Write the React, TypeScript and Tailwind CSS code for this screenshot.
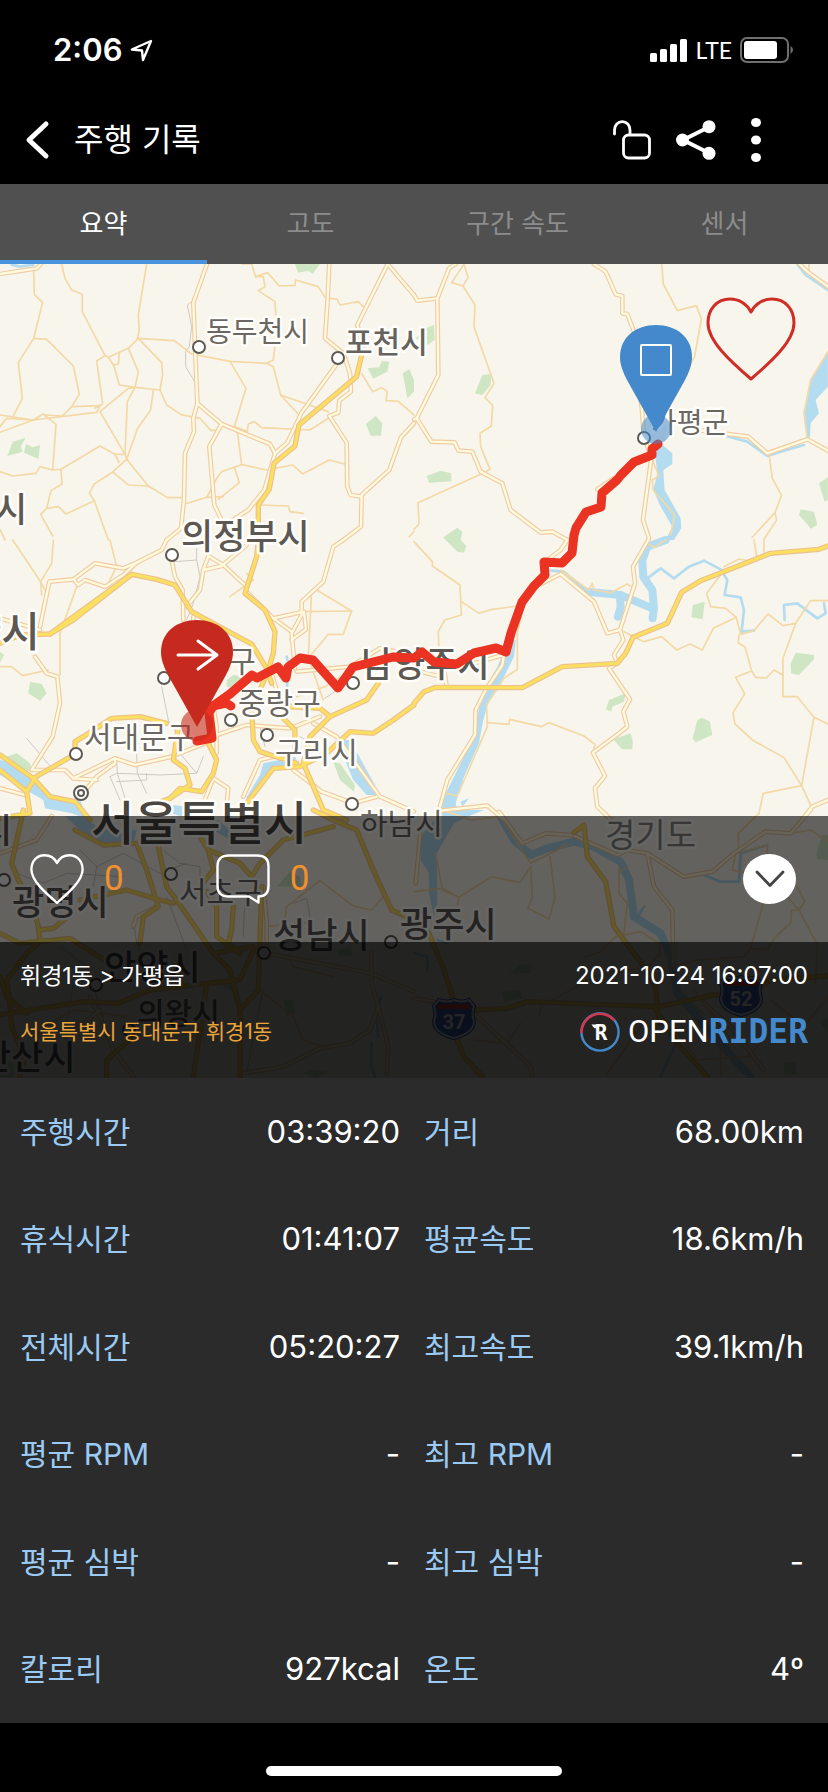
import React from 'react';

type Tile = {
  x: number;
  y: number;
  green?: string[];
  water?: string[];
  river?: string[];
  stream?: string[];
  rail?: string[];
  minor?: string[];
  major?: string[];
  highway?: string[];
};

// Vector tiles, drawn at three units per pixel
const tiles: Tile[] = [
  {
    x: 0,
    y: 260,
    green: ["22,588 38,545 77,533 62,560 68,575", "78,552 98,562 120,555 115,597 72,578", "885,12 960,12 938,42 925,32 895,38", "1103,325 1138,322 1145,303 1168,305 1162,335 1120,356", "1208,340 1228,328 1242,360 1242,395 1222,415 1215,375", "1098,492 1127,467 1147,490 1143,527 1112,527"],
    stream: ["35,14 60,20 100,14"],
    rail: ["575,125 562,135 575,200 568,260 557,275 557,320 587,370"],
    minor: [
      "185,12 195,55 215,90 247,103 247,155 315,287 325,292",
      "440,12 415,165 418,210 412,235",
      "101,35 103,103 128,128 101,235 55,308 67,415 40,468",
      "101,235 140,238 220,318 238,403 215,440 187,468 135,465",
      "0,465 100,480 290,457 300,437 215,440",
      "0,517 100,480 130,462 168,493 158,630 120,620 108,640 38,648 0,635",
      "0,500 20,475 100,480",
      "325,292 385,265 415,235 523,242 575,282 690,304 800,310 820,300 830,215 825,125 775,92 795,80 790,50 767,50 755,12 725,12",
      "767,50 803,38 838,78 885,76 887,60 955,80 975,112 1012,118 1020,135 1075,125 1092,142",
      "415,235 485,308 488,345 480,390 405,382 358,375 342,318 325,292",
      "385,265 415,335 405,382 382,425 375,583",
      "342,315 355,312 358,280",
      "315,287 290,303 308,432 285,445",
      "405,382 385,385 300,455 375,583 380,598 445,678 503,713 545,713",
      "460,390 452,450 413,505 380,598",
      "480,390 500,435 543,464 600,475 633,512 663,508",
      "375,583 345,583 300,558 183,628 158,630",
      "345,583 357,608",
      "183,628 186,672 153,692 140,745 175,740 198,762 283,722 268,700 283,672 338,636 380,598",
      "338,636 385,675 445,678",
      "283,722 325,840",
      "140,745 122,763 158,828",
      "0,808 15,840",
      "690,304 738,385 703,500 742,515 745,492 763,485 785,503 930,510 985,475",
      "800,310 820,320 842,405 900,468",
      "842,405 985,455",
      "712,515 725,614 800,630 878,615 908,642 988,600 1035,612",
      "725,614 703,622 665,635 650,655 620,712",
      "703,622 718,668 655,718",
      "545,735 620,712 670,710",
      "780,735 865,738 870,755 910,760",
      "1085,340 1118,395 1145,383 1162,395 1158,422 1195,424 1242,465",
      "1242,815 1228,830",
    ],
    major: [
      "0,42 110,25 125,10",
      "622,10 580,128 592,430 580,475 582,515 555,580 552,720 543,805 500,840",
      "592,430 665,492 810,552 825,580",
      "665,492 628,560 643,735 665,780",
      "988,10 983,120 975,235 1030,280 1050,340 1053,395 1018,422 1015,458 988,468 1040,548 1042,680 1052,705 1085,710 1083,800 1030,840",
      "1163,12 1072,195 1088,250 1085,290",
      "1163,12 1242,105",
      "1030,285 905,458 862,548 825,580 793,690 745,750 690,785",
      "1242,490 1203,532 1168,630 1085,705",
    ],
    highway: ["1085,285 1070,350 897,495 885,558 822,610 808,688 775,735 775,840"],
  },
  {
    x: 414,
    y: 260,
    green: ["183,400 205,345 232,342 230,375 205,405", "38,648 80,632 112,640 112,664 45,668", "88,832 130,803 145,815 140,840 95,840", "35,205 60,195 62,240 40,255 5,235", "1215,670 1242,652 1242,720 1232,725", "1155,765 1160,748 1200,755 1210,795 1190,806 1180,793"],
    water: ["720,555 740,550 775,580 775,612 748,630 752,690 800,775 802,805 780,840 755,840 775,800 740,740 718,690 730,640", "1242,275 1190,360 1172,460 1180,535 1188,530 1190,490 1215,460 1205,420 1242,380"],
    stream: ["870,510 950,532 1000,545 1060,588 1100,575 1170,555", "1150,12 1175,45 1242,90"],
    minor: [
      "150,12 113,68 147,78 162,52 150,12",
      "147,78 183,135 180,200 240,370 213,413 236,436 232,498 198,520 200,560 228,628 200,643 12,728 15,792 0,808",
      "743,12 748,72 790,152 847,137 862,177 842,290 830,310",
      "1242,275 1190,360 1170,460 1180,538",
      "1065,580 1075,655 1103,706 1083,758 1015,832",
      "1083,758 1088,780 1050,838",
      "715,600 735,648 715,660 718,690 782,765 770,825",
      "1185,12 1185,35",
    ],
    major: [
      "125,12 105,25 70,115 10,122 0,105",
      "70,115 73,345 8,475 52,545 122,547 133,572 175,575 200,635 265,670 290,750 380,818 415,815 460,840",
      "0,478 8,475",
      "540,12 575,35 605,103 625,108 625,160 640,162 660,215 683,440 690,530 712,595 687,780 705,835",
      "850,510 1003,530 1060,580 1180,538 1242,572",
      "550,688 600,655",
      "1155,10 1180,35 1242,80",
    ],
  },
  {
    x: 0,
    y: 540,
    green: ["85,460 90,425 125,432 140,460 120,482", "680,440 680,420 700,405 730,408 745,430 725,450", "20,650 50,640 90,670 95,695 70,690", "0,335 12,345 0,368", "1000,665 1020,670 1065,735 1062,755 1020,720"],
    water: ["0,660 0,705 130,780 135,805 215,820 265,840 240,780 150,770 95,715 30,668", "1010,600 1050,600 1125,735 1130,765 1100,765 1060,720", "790,670 885,650 895,672 820,690 760,775 738,775 780,705", "480,790 560,800 620,840 580,840 500,815"],
    stream: ["860,350 865,370 860,460"],
    rail: [
      "525,65 590,60 590,25",
      "590,60 600,110 580,190 560,240",
      "485,440 505,540",
      "330,710 350,700 480,705 590,700 610,650",
      "350,660 352,700 380,790",
      "410,640 412,700 440,760",
      "330,710 360,780",
      "440,700 440,720 350,725",
      "780,560 795,620",
      "1040,430 975,475",
      "505,540 535,590",
      "590,700 540,640",
      "80,595 160,690",
      "900,590 950,620",
    ],
    minor: [
      "950,150 1055,213 1030,283 985,283 925,355",
      "905,215 1055,213",
      "160,0 155,70 122,125 125,165",
      "38,0 122,125 140,160",
      "330,0 350,80 320,140",
      "0,380 35,380 68,407 145,390",
      "230,140 180,280 180,405",
      "935,150 925,355",
      "925,355 970,480",
      "690,170 760,120 740,100",
      "890,470 975,440 1040,400",
    ],
    major: [
      "500,0 485,30 410,68 370,85 285,70 220,118 148,125 120,260",
      "220,118 235,135 255,120 315,140 370,105 410,68",
      "0,235 120,270",
      "515,60 525,110 548,150 550,240",
      "580,230 580,255",
      "625,48 610,90 600,150 560,200",
      "625,48 670,75 740,140",
      "610,90 665,78 740,15",
      "1030,0 1000,20 970,125 905,185 905,225 875,280 885,385",
      "740,155 820,235 912,215 918,268 875,300",
      "820,235 875,275",
      "105,350 140,400 172,410 180,490 158,590 95,690",
      "815,400 830,450 880,490",
      "890,395 1050,380 1140,325 1242,345",
      "100,690 195,690 220,715 345,655 405,675 515,650",
      "345,655 345,670 290,710 240,770",
      "220,715 290,720",
      "650,585 740,555 870,565 960,530",
      "640,500 650,560 650,640",
      "640,715 685,745 680,790",
      "640,715 610,790",
      "940,550 1010,590 1140,770 1242,815",
      "1130,770 1060,790 965,755 880,690",
      "730,770 780,660 820,650",
      "0,745 75,765",
      "515,650 640,600 650,585",
    ],
    highway: [
      "0,310 60,285 150,282 220,240 395,103 470,118 525,135 575,215 755,312 800,385 815,430",
      "150,282 200,245 395,103",
      "775,0 770,50 735,160 795,210 825,275 820,340 805,390 780,450 755,500 760,600 780,635 890,670",
      "1242,495 1180,540 1120,580 1050,575 980,640 900,680 820,685 740,790",
      "1135,430 1100,480 990,530 930,590 910,670 940,740 970,810 1040,840",
      "990,530 960,505 860,500",
      "850,535 885,570 885,640",
      "500,550 420,530 335,535 250,590 225,605 225,630",
      "0,645 100,715 150,770 225,785 270,840",
      "100,715 230,640",
      "0,690 80,755 105,715",
      "80,755 90,820 0,835",
      "535,560 520,660 555,685 570,735 510,775",
      "620,600 650,660 640,700 605,755 540,745 510,775 470,790",
    ],
  },
  {
    x: 414,
    y: 540,
    green: ["837,195 872,185 866,238 832,232", "1130,372 1145,338 1200,345 1200,358 1155,405 1132,400", "850,540 865,533 888,545 895,585 845,607 836,595", "597,598 650,580 657,605 655,628 625,628", "585,480 635,460 630,485 595,500 592,515 576,508", "95,0 140,0 157,18 150,38 130,35"],
    water: ["285,300 305,300 300,350 270,410 225,480 208,540 195,610 150,710 125,790 130,815 80,810 90,770 175,600 205,460 250,380", "140,785 165,775 145,800"],
    river: ["755,0 700,20 685,60 688,110 715,150 720,205 716,235", "520,155 620,165 715,205", "618,165 620,200 612,230"],
    stream: ["700,115 740,85 780,115 825,80 870,62 920,88 940,120 932,165 980,172 990,210 983,275 1020,272", "1112,240 1110,195 1150,190 1210,235 1235,220 1230,190", "410,92 450,95 520,155"],
    minor: [
      "0,5 55,65 55,78 138,135 142,225 92,240 73,275 75,340",
      "142,185 195,220 235,208 310,198 390,100",
      "325,210 310,280 310,388 270,415 218,495 220,560 130,768 95,760",
      "220,548 285,553 287,538 382,560 405,548 510,588 543,613 537,638",
      "630,275 690,305 743,290 788,330 828,312 865,330 898,265 967,232 935,205 890,200 878,160 920,105",
      "967,232 980,283 1020,272 1062,222 1107,257 1145,250 1190,182 1242,182",
      "975,285 973,310 993,320 1013,393 1025,412 1057,414 1080,390 1107,405 1107,470 1150,470 1200,532 1242,552",
      "1013,393 965,412 992,462 957,518 963,552 1015,600 1110,653 1163,737",
      "1145,250 1107,355 1107,405",
      "1200,532 1163,737 1048,760 1035,820",
      "1163,737 1192,800",
      "1020,0 1030,60",
      "1050,0 1050,40",
      "930,80 975,57 1000,62",
      "440,90 525,150 535,130 540,150 590,158 640,132 660,145",
      "700,10 720,22 755,0",
    ],
    major: [
      "460,0 440,30 400,60",
      "385,130 440,102 540,185 580,280 618,270 663,130 657,80 703,0",
      "618,270 628,300 600,345 610,370 585,385 648,478 628,515 640,560 615,580 537,638 573,708 543,745 550,800 590,838",
      "270,345 265,375 215,450 185,510 183,585 100,720 78,800",
      "1242,780 1195,800 1165,838",
      "80,812 220,797 270,840",
      "0,390 70,408 90,390 180,370 250,350 270,345",
      "92,400 98,440",
    ],
    highway: ["0,490 30,455 65,442 325,443 445,380 610,370 635,340 657,292 760,250 803,157 860,122 1070,40 1215,28 1242,18"],
  },
  {
    x: 0,
    y: 810,
    green: ["830,230 870,185 900,200 905,230", "650,520 700,500 700,545", "850,570 880,570 885,610 860,620", "1010,420 1050,410 1060,435 1020,440", "0,745 40,760 45,800 0,803", "905,790 940,780 980,785 950,803"],
    water: ["195,18 240,60 290,100 400,100 410,60 300,55 240,18", "640,18 700,70 690,90 640,60"],
    stream: ["1145,560 1128,600 1135,680", "1115,700 1112,760 1125,800"],
    rail: [
      "240,120 290,170 280,230",
      "290,170 370,130 480,190 560,160",
      "50,190 130,220 200,190 370,200",
      "490,120 540,160 600,170 600,210",
      "735,260 730,380",
      "400,330 410,400 430,440",
      "220,520 200,640 260,700",
      "790,540 760,680 740,790",
      "880,280 920,265 935,350 900,330",
      "500,260 560,420",
      "180,410 260,470 310,620",
    ],
    minor: [
      "850,360 860,290 960,212 1060,288 1115,300 1150,260",
      "780,540 880,620 910,690 970,710",
      "100,690 150,640 220,600 380,620",
      "860,420 880,470 1000,500",
      "800,350 850,345",
    ],
    major: [
      "155,18 110,90 0,130",
      "320,18 310,60",
      "790,230 800,330 800,430 1115,490 1242,545",
      "730,790 850,770 960,715 1050,700 1110,660 1135,590 1115,520 1115,430",
      "1135,590 1165,710 1160,790",
      "400,350 410,320 470,290",
      "270,560 300,620 340,720 400,800",
      "200,680 300,600",
    ],
    highway: [
      "70,0 35,160 55,210 100,290 115,350 120,395 80,430 20,510 30,590 35,650 75,740 60,800",
      "225,60 310,105 400,100",
      "410,100 440,180 475,290 430,320 420,400",
      "475,110 500,230 540,285 640,430 690,480",
      "600,80 625,120 720,160 755,200 780,160 850,90 1000,50",
      "940,0 1000,30 1070,60 1120,180 1175,300 1242,330",
      "625,120 640,180 600,230",
      "620,245 650,290 650,380 720,430",
      "700,290 695,360 680,420",
      "785,230 775,540 720,600 720,800",
      "620,520 610,600 580,800",
      "0,370 60,400 210,385 330,460",
      "0,615 250,575 355,580 450,540 620,520 720,510 760,420",
      "115,360 160,355 215,310",
      "240,270 380,240 480,270 520,280",
      "320,800 320,750 400,680",
      "690,480 720,600",
      "640,430 760,410",
      "0,500 20,560 80,610",
    ],
  },
  {
    x: 414,
    y: 810,
    green: ["1208,130 1225,75 1242,75 1242,150 1208,148", "285,490 320,465 355,462 350,490", "262,545 320,540 325,565 270,575", "800,540 850,590 880,620 840,600", "1110,760 1145,755 1145,795 1110,790", "1220,640 1242,620 1242,670"],
    water: ["20,80 85,0 210,0 160,20 120,40 68,130 70,280 60,320 45,250 45,190 20,150"],
    river: ["260,20 300,90 350,135 400,115 480,95 540,110 620,155 645,210 660,320 740,370 770,440 790,550 900,680 1010,800"],
    stream: ["870,195 920,215 975,215 980,130 1060,105", "0,430 40,440 40,480", "790,690 740,800", "70,390 100,400", "670,320 690,290"],
    minor: [
      "65,130 85,240 135,262 130,285",
      "0,245 85,235 135,262 233,200 318,218 350,170",
      "350,170 355,260 342,295 405,327 423,265 408,140",
      "615,170 615,250 640,280 630,370 600,385",
      "640,170 615,190",
      "515,440 560,425 605,380 680,365 735,400 740,430 700,470 540,500 380,590 375,620",
      "1060,130 1060,105 965,130 955,180 1000,190",
      "975,130 973,70 1035,10",
      "1120,260 1155,300 1133,300 1130,340 1085,380 1060,420 1010,415 1048,280",
      "1155,300 1172,275 1150,230",
      "1155,300 1210,405 1205,520",
      "1130,70 1190,60 1242,95",
      "735,480 850,450 990,440 1010,415",
      "840,540 920,650 920,790",
      "780,650 850,750 1000,740 1050,690",
      "180,690 280,700 320,640",
      "580,790 680,650",
      "1070,570 1170,650 1242,560",
      "100,5 170,30 260,20 350,160 460,105",
    ],
    major: [
      "255,5 325,100 395,70 475,75 610,135 640,120 700,130 810,200 895,185 960,130 1055,65 1130,70 1190,0",
      "700,130 720,230 775,300 778,460",
      "20,60 5,220",
      "180,610 350,770 355,800",
      "0,565 60,575",
      "870,580 950,650 1050,780",
    ],
    highway: [
      "480,68 510,45 520,140 575,215 600,350 690,470 725,530 735,640",
      "0,340 45,370 90,480 115,560 125,680 150,740 205,800",
      "180,600 280,595 340,575 735,590 900,555 1000,560 1070,510 1242,498",
      "720,590 790,700 880,800",
    ],
  },
];

// One entry for each stroke laid on the map, bottom first
const strokes: { layer: 'river' | 'stream' | 'rail' | 'minor' | 'major' | 'highway'; color: string; width: number }[] = [
  { layer: 'river', color: '#b4dcf0', width: 24 },
  { layer: 'stream', color: '#b4dcf0', width: 8 },
  { layer: 'rail', color: '#cbcac4', width: 3 },
  { layer: 'minor', color: '#f3d9a5', width: 5 },
  { layer: 'major', color: '#f0cba6', width: 14 },
  { layer: 'major', color: '#fffbdc', width: 7 },
  { layer: 'highway', color: '#eec08e', width: 16 },
  { layer: 'highway', color: '#fbe05f', width: 9 },
];

const places = [
  { name: '동두천시', x: 206, y: 342, size: 28, tone: '#6b6863', weight: 400 },
  { name: '포천시', x: 345, y: 353, size: 30, tone: '#66635e', weight: 500 },
  { name: '가평군', x: 651, y: 433, size: 28, tone: '#6b6863', weight: 400 },
  { name: '시', x: -5, y: 522, size: 35, tone: '#5c5954', weight: 500 },
  { name: '의정부시', x: 181, y: 549, size: 35, tone: '#5c5954', weight: 500 },
  { name: '고양시', x: -76, y: 647, size: 42, tone: '#5c5954', weight: 500 },
  { name: '남양주시', x: 361, y: 677, size: 35, tone: '#5c5954', weight: 500 },
  { name: '노원구', x: 173, y: 672, size: 30, tone: '#6b6863', weight: 400 },
  { name: '중랑구', x: 238, y: 714, size: 30, tone: '#6b6863', weight: 400 },
  { name: '서대문구', x: 84, y: 748, size: 30, tone: '#6b6863', weight: 400 },
  { name: '구리시', x: 275, y: 763, size: 30, tone: '#6b6863', weight: 400 },
  { name: '서울특별시', x: 91, y: 840, size: 47, tone: '#4a4742', weight: 500 },
  { name: '시', x: -20, y: 843, size: 35, tone: '#5c5954', weight: 500 },
  { name: '하남시', x: 360, y: 834, size: 30, tone: '#6b6863', weight: 400 },
  { name: '경기도', x: 605, y: 847, size: 33, tone: '#8b8882', weight: 400 },
  { name: '광명시', x: 12, y: 915, size: 35, tone: '#5c5954', weight: 500 },
  { name: '서초구', x: 179, y: 903, size: 30, tone: '#6b6863', weight: 400 },
  { name: '성남시', x: 273, y: 948, size: 35, tone: '#5c5954', weight: 500 },
  { name: '광주시', x: 400, y: 937, size: 35, tone: '#5c5954', weight: 500 },
  { name: '안양시', x: 104, y: 980, size: 35, tone: '#5c5954', weight: 500 },
  { name: '의왕시', x: 137, y: 1024, size: 30, tone: '#66635e', weight: 500 },
  { name: '안산시', x: -21, y: 1070, size: 35, tone: '#5c5954', weight: 500 },
];

const towns = [
  [199, 347], [338, 358], [644, 438], [172, 555], [164, 678], [231, 720], [267, 735], [353, 683],
  [76, 754], [352, 804], [171, 874], [4, 880], [264, 953], [391, 942], [96, 985], [129, 1030],
];

const route =
  '197,741 212,738 209,713 213,706 230,694 252,675 257,678 278,667 286,678 288,667 300,658 313,660 338,688 353,667 393,657 414,658 422,652 434,662 457,664 474,653 496,648 506,652 511,633 522,602 534,586 545,575 544,562 562,563 572,553 574,535 576,528 586,512 601,507 602,493 617,480 621,475 634,462 652,455 652,449 658,444';

const stats = [
  { label: '주행시간', value: '03:39:20' },
  { label: '거리', value: '68.00km' },
  { label: '휴식시간', value: '01:41:07' },
  { label: '평균속도', value: '18.6km/h' },
  { label: '전체시간', value: '05:20:27' },
  { label: '최고속도', value: '39.1km/h' },
  { label: '평균 RPM', value: '-' },
  { label: '최고 RPM', value: '-' },
  { label: '평균 심박', value: '-' },
  { label: '최고 심박', value: '-' },
  { label: '칼로리', value: '927kcal' },
  { label: '온도', value: '4º' },
];

const tabs = ['요약', '고도', '구간 속도', '센서'];

const PIN = 'M0 0 L-29 -52 C-33 -60 -36 -67 -36 -75 C-36 -95 -20 -107 0 -107 C20 -107 36 -95 36 -75 C36 -67 33 -60 29 -52 Z';

const Shield: React.FC<{ x: number; y: number; num: string }> = ({ x, y, num }) => (
  <g transform={`translate(${x} ${y})`}>
    <path d="M-15 -19 Q-7 -16 0 -19 Q7 -16 15 -19 L20 -13 Q17 -6 20 2 Q20 14 0 19 Q-20 14 -20 2 Q-17 -6 -20 -13 Z" fill="#3f68c9" stroke="#2c55bb" strokeWidth="4" />
    <path d="M-15 -19 Q-7 -16 0 -19 Q7 -16 15 -19 L20 -13 Q17 -6 20 2 Q20 14 0 19 Q-20 14 -20 2 Q-17 -6 -20 -13 Z" fill="#3f68c9" stroke="#e9eefb" strokeWidth="2" />
    <path d="M-15 -16 Q-7 -13 0 -16 Q7 -13 15 -16 L17 -10 H-17 Z" fill="#dd4a3f" />
    <text y="10" textAnchor="middle" className="font-['Roboto',sans-serif]" fontSize="20" fontWeight="700" fill="#fff">{num}</text>
  </g>
);

const RouteMap: React.FC = () => (
  <svg
    viewBox="0 264 828 814"
    preserveAspectRatio="xMidYMid slice"
    className="absolute inset-0 w-full h-full bg-[#f8f5ec]"
    role="img"
    aria-label="주행 경로"
  >
    {tiles.map((tile) => (
      <g key={`area-${tile.x}-${tile.y}`} transform={`translate(${tile.x} ${tile.y}) scale(0.3333)`}>
        {tile.green?.map((points) => <polygon key={points} points={points} fill="#cfe6c4" />)}
        {tile.water?.map((points) => <polygon key={points} points={points} fill="#b4dcf0" />)}
      </g>
    ))}
    {strokes.map((stroke, idx) =>
      tiles.map((tile) => (
        <g
          key={`${idx}-${tile.x}-${tile.y}`}
          transform={`translate(${tile.x} ${tile.y}) scale(0.3333)`}
          fill="none"
          stroke={stroke.color}
          strokeWidth={stroke.width}
          strokeLinejoin="round"
          strokeLinecap="round"
        >
          {tile[stroke.layer]?.map((points) => <polyline key={points} points={points} />)}
        </g>
      ))
    )}

    <Shield x={454} y={1019} num="37" />
    <Shield x={741} y={996} num="52" />

    {places.map((place) => (
      <text
        key={`${place.name}-${place.y}`}
        x={place.x}
        y={place.y}
        fontSize={place.size}
        fontWeight={place.weight}
        fill={place.tone}
        stroke="#fffefa"
        strokeWidth="5"
        strokeLinejoin="round"
        paintOrder="stroke"
      >
        {place.name}
      </text>
    ))}
    {towns.map(([x, y]) => (
      <circle key={`${x}-${y}`} cx={x} cy={y} r="6" fill="#fff" stroke="#5c5954" strokeWidth="2" />
    ))}
    <g fill="#fff" stroke="#5c5954" strokeWidth="2">
      <circle cx="81" cy="793" r="7" />
      <circle cx="81" cy="793" r="3" />
    </g>

    <g fill="none" stroke="#ea3323" strokeWidth="9" strokeLinejoin="round" strokeLinecap="round">
      <polyline points={route} />
      <polyline points="213,706 226,703 231,706" />
    </g>

    <g transform="translate(197 727)">
      <circle cy="-2" r="16" fill="#c62a1e" fillOpacity="0.6" />
      <path d={PIN} fill="#c62a1e" />
      <path d="M-19 -72 H19 M1 -86 L20 -72 L1 -58" fill="none" stroke="#fff" strokeWidth="3" strokeLinecap="round" strokeLinejoin="round" />
    </g>
    <g transform="translate(656 432)">
      <circle cy="-3" r="15" fill="#4389cb" fillOpacity="0.55" />
      <path d={PIN} fill="#4389cb" />
      <rect x="-15" y="-87" width="30" height="30" rx="1" fill="none" stroke="#fff" strokeWidth="2" />
    </g>
  </svg>
);

const HeartIcon: React.FC<{ className: string; strokeWidth: number }> = ({ className, strokeWidth }) => (
  <svg viewBox="0 0 90 84" fill="none" stroke="currentColor" strokeWidth={strokeWidth} strokeLinejoin="round" className={className} aria-hidden="true">
    <path d="M45 15 C41 7 33 2 24 2 C11 2 2 12 2 26 C2 44 24 64 45 82 C66 64 88 44 88 26 C88 12 79 2 66 2 C57 2 49 7 45 15 Z" />
  </svg>
);

const StatusBar: React.FC = () => (
  <div className="flex h-24 items-center justify-between pt-1 pl-[53px] pr-[34px]">
    <div className="flex items-center gap-2">
      <span className="text-[31px] leading-10 font-semibold">2:06</span>
      <svg viewBox="0 0 23 23" className="h-[23px] w-[23px]" fill="none" stroke="currentColor" strokeWidth="2.4" strokeLinejoin="round" aria-hidden="true">
        <path d="M21 2 L1.800 10.500 L12 11.500 L13 21 Z" />
      </svg>
    </div>
    <div className="flex items-center gap-2">
      <svg viewBox="0 0 38 24" className="h-6 w-[38px]" fill="currentColor" aria-hidden="true">
        <rect x="1" y="15" width="7" height="9" rx="1.500" />
        <rect x="11" y="11" width="7" height="13" rx="1.500" />
        <rect x="21" y="6" width="7" height="18" rx="1.500" />
        <rect x="31" y="1" width="7" height="23" rx="1.500" />
      </svg>
      <span className="font-['Lato',sans-serif] text-[23px] leading-8">LTE</span>
      <svg viewBox="0 0 54 26" className="h-[26px] w-[54px]" aria-hidden="true">
        <rect x="1" y="1" width="47" height="24" rx="6" fill="none" stroke="#6f6f6f" strokeWidth="2" />
        <rect x="4" y="4" width="33" height="18" rx="3" fill="#fff" />
        <path d="M50.500 9 Q53 10.500 53 13 Q53 15.500 50.500 17 Z" fill="#6f6f6f" />
      </svg>
    </div>
  </div>
);

const TitleBar: React.FC = () => (
  <header className="flex h-[88px] items-center pr-11 pl-4">
    <button type="button" aria-label="뒤로" className="flex h-16 w-[58px] items-center pl-2">
      <svg viewBox="0 0 28 40" className="h-10 w-7" fill="none" stroke="currentColor" strokeWidth="5" strokeLinecap="round" strokeLinejoin="round">
        <path d="M22 4 L5 20 L22 36" />
      </svg>
    </button>
    <h1 className="flex-1 text-[32px] leading-10 font-normal">주행 기록</h1>
    <button type="button" aria-label="잠금 해제" className="flex h-16 w-16 items-center justify-center">
      <svg viewBox="0 0 38 40" className="h-10 w-[38px]" fill="none" stroke="currentColor" strokeWidth="2.800" strokeLinecap="round">
        <path d="M1.500 14 V10 C1.500 5 5 1.700 9.300 1.700 C13.600 1.700 17 5 17 10 V14.500" />
        <rect x="10.500" y="15" width="26" height="23" rx="5" />
      </svg>
    </button>
    <button type="button" aria-label="공유" className="flex h-16 w-16 items-center justify-center">
      <svg viewBox="0 0 40 40" className="h-10 w-10" fill="currentColor">
        <path d="M33 7 L7 20 L33 33" fill="none" stroke="currentColor" strokeWidth="4" />
        <circle cx="6.500" cy="20" r="6.500" />
        <circle cx="33" cy="6.700" r="6.500" />
        <circle cx="33" cy="33.300" r="6.500" />
      </svg>
    </button>
    <button type="button" aria-label="더보기" className="flex h-16 w-14 items-center justify-center">
      <svg viewBox="0 0 10 44" className="h-11 w-[10px]" fill="currentColor">
        <ellipse cx="5" cy="4.500" rx="5" ry="4.500" />
        <ellipse cx="5" cy="22" rx="5" ry="4.500" />
        <ellipse cx="5" cy="39.500" rx="5" ry="4.500" />
      </svg>
    </button>
  </header>
);

const Logo: React.FC = () => (
  <div className="flex items-center gap-2 leading-8">
    <svg viewBox="0 0 42 42" className="h-[42px] w-10" aria-hidden="true">
      <g fill="none" strokeWidth="2.500">
        <circle cx="21" cy="21" r="19.500" stroke="#4389cb" />
        <path d="M1.500 22 A19.500 19.500 0 0 1 36 9" stroke="#d6354d" />
      </g>
      <path d="M12 13 H18 V17 H15 Z" fill="#fff" />
      <text x="22" y="29" textAnchor="middle" className="font-['DejaVu_Sans_Mono',monospace]" fontSize="22" fontWeight="700" fill="#fff">R</text>
    </svg>
    <div className="flex items-center">
      <span className="font-['Roboto',sans-serif] text-[31px]">OPEN</span>
      <span className="font-['DejaVu_Sans_Mono',monospace] text-[33px] font-bold text-[#4389cb]">RIDER</span>
    </div>
  </div>
);

export default function App() {
  return (
    <div className="flex min-h-screen flex-col bg-black font-['Inter','Noto_Sans_CJK_KR',sans-serif] text-white">
      <StatusBar />
      <TitleBar />

      <nav role="tablist" className="grid h-20 grid-cols-4 bg-[#505050]">
        {tabs.map((tab, idx) => (
          <button
            key={tab}
            type="button"
            role="tab"
            aria-selected={idx === 0}
            className={`border-b-4 pt-1 text-[26px] leading-9 ${idx === 0 ? 'border-[#4893dc] text-white' : 'border-transparent text-[#8c8c8c]'}`}
          >
            {tab}
          </button>
        ))}
      </nav>

      <section className="relative overflow-hidden">
        <RouteMap />

        <div className="relative flex aspect-3/2 w-full items-start justify-end pt-8 pr-8">
          <button type="button" aria-label="좋아요" className="text-[#cf2e27]">
            <HeartIcon className="h-[86px] w-[90px]" strokeWidth={3} />
          </button>
        </div>

        <div className="relative flex h-[126px] items-center justify-between bg-black/60 pr-8 pl-[30px]">
          <div className="flex gap-[92px]">
            <button type="button" aria-label="좋아요 0" className="flex items-center gap-5">
              <HeartIcon className="h-[50px] w-[54px]" strokeWidth={4} />
              <span className="font-['Roboto',sans-serif] text-[35px] leading-10 text-[#f0902e]">0</span>
            </button>
            <button type="button" aria-label="댓글 0" className="flex items-center gap-5">
              <svg viewBox="0 0 54 50" className="h-[50px] w-[54px]" fill="none" stroke="currentColor" strokeWidth="2.400" strokeLinejoin="round" aria-hidden="true">
                <path d="M13 1.500 H41 Q52.500 1.500 52.500 12 V32 Q52.500 42.500 42.500 42.500 V48.500 L33 42.500 H13 Q1.500 42.500 1.500 32 V12 Q1.500 1.500 13 1.500 Z" />
              </svg>
              <span className="font-['Roboto',sans-serif] text-[35px] leading-10 text-[#f0902e]">0</span>
            </button>
          </div>
          <button type="button" aria-label="접기" className="flex h-[50px] w-[53px] items-center justify-center rounded-[50%] bg-white text-[#444]">
            <svg viewBox="0 0 30 18" className="h-[18px] w-[30px]" fill="none" stroke="currentColor" strokeWidth="2.800" strokeLinecap="round" strokeLinejoin="round">
              <path d="M2 2 L15 15.500 L28 2" />
            </svg>
          </button>
        </div>

        <div className="relative flex flex-col gap-3 bg-black/86 pt-3 pr-5 pb-6 pl-5">
          <div className="flex h-11 items-center justify-between">
            <p className="text-[23px] leading-8">휘경1동 &gt; 가평읍</p>
            <time dateTime="2021-10-24T16:07:00" className="text-2xl leading-8">2021-10-24 16:07:00</time>
          </div>
          <div className="flex h-11 items-center justify-between">
            <p className="text-[21px] leading-8 text-[#e9a43a]">서울특별시 동대문구 휘경1동</p>
            <Logo />
          </div>
        </div>
      </section>

      <dl className="grid flex-1 auto-rows-fr grid-cols-2 gap-x-6 bg-[#2b2b2b] pr-6 pl-5">
        {stats.map((stat) => (
          <div key={stat.label} className="flex min-h-20 items-center justify-between">
            <dt className="text-[30px] leading-10 text-[#9bcbf5]">{stat.label}</dt>
            <dd className="text-[31px] leading-10">{stat.value}</dd>
          </div>
        ))}
      </dl>

      <footer className="flex h-[69px] items-end justify-center pb-4">
        <div className="h-[10px] w-[296px] rounded-full bg-white" />
      </footer>
    </div>
  );
}
